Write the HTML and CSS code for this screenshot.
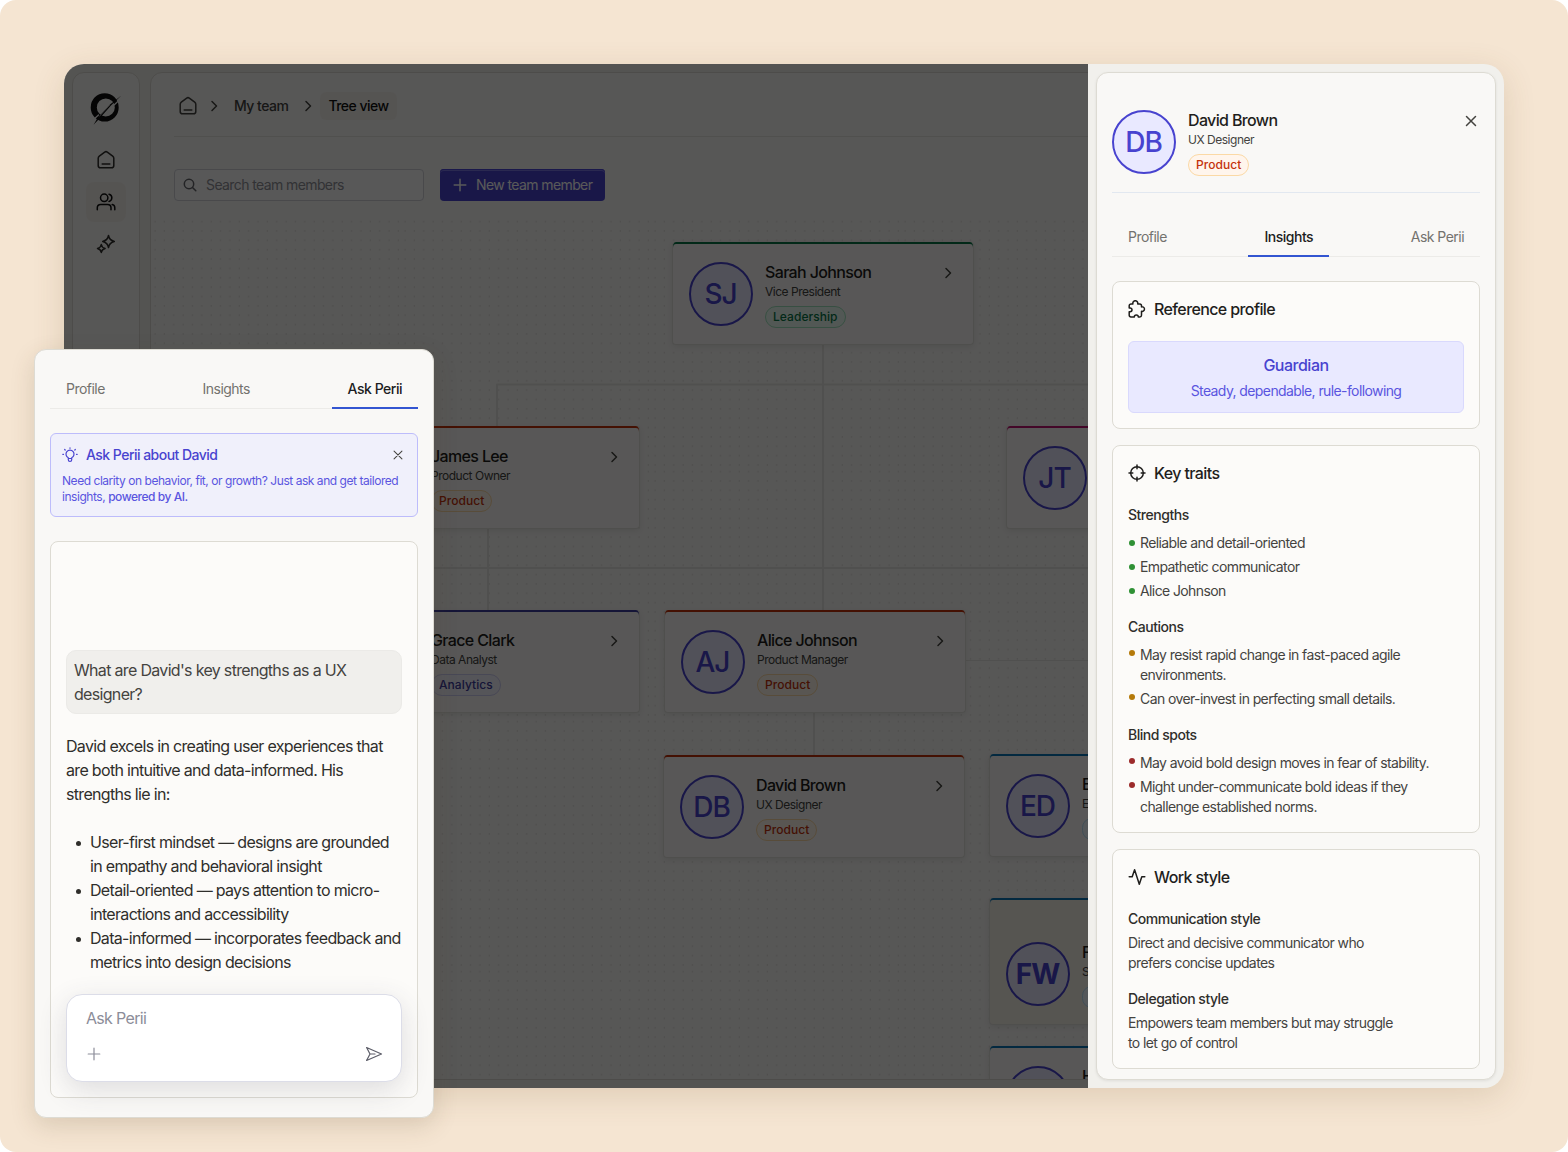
FILE: index.html
```html
<!DOCTYPE html>
<html lang="en">

<head>
    <meta charset="UTF-8">
    <meta name="viewport" content="width=device-width, initial-scale=1.0">
    <link rel="stylesheet" href="styles.css">
    <title>Perii - My team</title>
</head>

<body>
    <!-- shared icons -->
    <svg class="sprite" width="0" height="0">
        <symbol id="i-home" viewBox="0 0 20 20">
            <path d="M2.2 8.2c0-.9.4-1.6 1.1-2.1l5.4-4c.8-.6 1.8-.6 2.6 0l5.4 4c.7.5 1.1 1.2 1.1 2.1v7.2a2.4 2.4 0 0 1-2.4 2.4H4.6a2.4 2.4 0 0 1-2.4-2.4z" />
            <path d="M6.2 14.1h7.6" />
        </symbol>
        <symbol id="i-chevron" viewBox="0 0 16 16">
            <path d="m6 3.5 4.5 4.5L6 12.500" />
        </symbol>
        <symbol id="i-x" viewBox="0 0 16 16">
            <path d="m3.500 3.500 9 9m0-9-9 9" />
        </symbol>
        <symbol id="i-plus" viewBox="0 0 16 16">
            <path d="M8 2.200v11.600M2.200 8h11.600" />
        </symbol>
    </svg>

    <main class="stage">
        <div class="window">
            <section class="workspace">
                <nav class="sidebar">
                    <svg class="logo" viewBox="0 0 32 34">
                        <path fill-rule="evenodd" d="M14.700 2.200a14 14.200 0 1 0 0 28.400a14 14.200 0 1 0 0-28.400zM15.800 7.400a9 9 0 1 1 0 18a9 9 0 1 1 0-18z" />
                        <path class="logo-gap" d="M31 7.500 22.500 15.500M2.500 29.500 8.500 24" />
                        <path d="M31.400 4.600 21 14.400 8.800 28.200 3.600 33.800 7.500 27 20 13.400z" />
                        <path class="logo-gap thin" d="M19.500 14.300 9.600 25.200" />
                    </svg>
                    <a class="nav-item"><svg class="icon"><use href="#i-home" /></svg></a>
                    <a class="nav-item active">
                        <svg class="icon" viewBox="0 0 20 20">
                            <circle cx="8.200" cy="5.800" r="3.700" />
                            <path d="M13 2.200a3.700 3.700 0 0 1 0 7.200M1.300 17.800v-2c0-1.900 1.500-3.400 3.400-3.400h6.900c1.900 0 3.400 1.500 3.400 3.400v2M16.200 12.600c1.600.3 2.600 1.600 2.600 3.200v2" />
                        </svg>
                    </a>
                    <a class="nav-item">
                        <svg class="icon" viewBox="0 0 20 20">
                            <path d="M12.500 1.500c.6 3.500 2 5 5.800 6-3.800 1-5.200 2.500-5.800 6-.6-3.500-2-5-5.800-6 3.800-1 5.200-2.500 5.800-6zM5.300 10.500c.4 2.400 1.400 3.400 3.800 4-2.400.6-3.400 1.600-3.800 4-.4-2.400-1.400-3.400-3.800-4 2.400-.6 3.400-1.600 3.800-4z" />
                        </svg>
                    </a>
                </nav>

                <div class="panel">
                    <header class="crumbs">
                        <svg class="icon"><use href="#i-home" /></svg>
                        <svg class="icon-sm"><use href="#i-chevron" /></svg>
                        <a class="crumb">My team</a>
                        <svg class="icon-sm"><use href="#i-chevron" /></svg>
                        <a class="crumb current">Tree view</a>
                    </header>
                    <div class="toolbar">
                        <div class="search">
                            <svg class="icon-sm" viewBox="0 0 16 16">
                                <circle cx="7" cy="7" r="4.700" />
                                <path d="m10.500 10.500 3.300 3.300" />
                            </svg>
                            <span>Search team members</span>
                        </div>
                        <button class="btn-new"><svg class="icon-sm"><use href="#i-plus" /></svg>New team member</button>
                    </div>

                    <div class="board">
                        <svg class="links" width="1100" height="862">
                            <defs>
                                <pattern id="dot" width="9.36" height="9.36" patternUnits="userSpaceOnUse">
                                    <circle cx="4" cy="4.600" r=".6" />
                                </pattern>
                                <pattern id="tile" width="250" height="250" patternUnits="userSpaceOnUse">
                                    <rect width="250" height="250" fill="url(#dot)" />
                                </pattern>
                            </defs>
                            <rect width="1100" height="862" fill="url(#tile)" />
                            <path d="M672 128v265M346 209v-41.500h754M337 311v82M100 351h1000M663 496v42" />
                            <path class="thin" d="M815 443.500h285" />
                        </svg>

                        <article class="node node-sarah leadership">
                            <div class="avatar">SJ</div>
                            <div class="person">
                                <h3>Sarah Johnson</h3>
                                <p>Vice President</p>
                                <span class="chip">Leadership</span>
                            </div>
                            <svg class="icon-sm"><use href="#i-chevron" /></svg>
                        </article>
                        <article class="node node-james product">
                            <div class="avatar">JL</div>
                            <div class="person">
                                <h3>James Lee</h3>
                                <p>Product Owner</p>
                                <span class="chip">Product</span>
                            </div>
                            <svg class="icon-sm"><use href="#i-chevron" /></svg>
                        </article>
                        <article class="node node-jt people">
                            <div class="avatar">JT</div>
                        </article>
                        <article class="node node-grace analytics">
                            <div class="avatar">GC</div>
                            <div class="person">
                                <h3>Grace Clark</h3>
                                <p>Data Analyst</p>
                                <span class="chip">Analytics</span>
                            </div>
                            <svg class="icon-sm"><use href="#i-chevron" /></svg>
                        </article>
                        <article class="node node-alice product">
                            <div class="avatar">AJ</div>
                            <div class="person">
                                <h3>Alice Johnson</h3>
                                <p>Product Manager</p>
                                <span class="chip">Product</span>
                            </div>
                            <svg class="icon-sm"><use href="#i-chevron" /></svg>
                        </article>
                        <article class="node node-david product">
                            <div class="avatar">DB</div>
                            <div class="person">
                                <h3>David Brown</h3>
                                <p>UX Designer</p>
                                <span class="chip">Product</span>
                            </div>
                            <svg class="icon-sm"><use href="#i-chevron" /></svg>
                        </article>
                        <article class="node node-ed engineering">
                            <div class="avatar">ED</div>
                            <div class="person">
                                <h3>E</h3>
                                <p>E</p>
                                <span class="chip">&nbsp;</span>
                            </div>
                        </article>
                        <article class="node node-fw engineering">
                            <div class="avatar bold">FW</div>
                            <div class="person">
                                <h3>F</h3>
                                <p>S</p>
                                <span class="chip">&nbsp;</span>
                            </div>
                        </article>
                        <article class="node node-h engineering">
                            <div class="avatar"></div>
                            <div class="person">
                                <h3>H</h3>
                                <p>&nbsp;</p>
                                <span class="chip">&nbsp;</span>
                            </div>
                        </article>
                    </div>
                </div>
            </section>

            <aside class="drawer">
                <div class="drawer-panel">
                    <header class="profile product">
                        <div class="avatar">DB</div>
                        <div class="person">
                            <h3>David Brown</h3>
                            <p>UX Designer</p>
                            <span class="chip">Product</span>
                        </div>
                        <svg class="icon-sm close"><use href="#i-x" /></svg>
                    </header>
                    <nav class="tabs">
                        <a class="tab">Profile</a>
                        <a class="tab active">Insights</a>
                        <a class="tab">Ask Perii</a>
                    </nav>

                    <section class="card">
                        <h2>
                            <svg class="icon-md" viewBox="0 0 18 18">
                                <path d="M3 3.900h1.900a2.500 2.500 0 1 1 4.800 0h2a1.800 1.800 0 0 1 1.800 1.800v1.200a2.300 2.300 0 1 1 0 4.400v3.900a1.700 1.700 0 0 1-1.700 1.700h-1.500a2 2 0 1 0-4 0H2.900a1.700 1.700 0 0 1-1.700-1.700v-3.500h.9a1.900 1.900 0 1 0 0-3.800h-.9v-2.200A1.800 1.800 0 0 1 3 3.900z" />
                            </svg>
                            Reference profile
                        </h2>
                        <div class="reference">
                            <strong>Guardian</strong>
                            <span>Steady, dependable, rule-following</span>
                        </div>
                    </section>

                    <section class="card">
                        <h2>
                            <svg class="icon-md" viewBox="0 0 18 18">
                                <circle cx="9" cy="9" r="6.300" />
                                <path d="M9 1v3.800M9 13.200V17M1 9h3.800M13.200 9H17" />
                            </svg>
                            Key traits
                        </h2>
                        <h4>Strengths</h4>
                        <ul class="traits green">
                            <li>Reliable and detail-oriented</li>
                            <li>Empathetic communicator</li>
                            <li>Alice Johnson</li>
                        </ul>
                        <h4>Cautions</h4>
                        <ul class="traits amber">
                            <li>May resist rapid change in fast-paced agile<br>environments.</li>
                            <li>Can over-invest in perfecting small details.</li>
                        </ul>
                        <h4>Blind spots</h4>
                        <ul class="traits red">
                            <li>May avoid bold design moves in fear of stability.</li>
                            <li>Might under-communicate bold ideas if they<br>challenge established norms.</li>
                        </ul>
                    </section>

                    <section class="card">
                        <h2>
                            <svg class="icon-md" viewBox="0 0 18 18">
                                <path d="M1.200 8.800h3l2.400-7 4.700 14.400 2.500-7.400h3" />
                            </svg>
                            Work style
                        </h2>
                        <h4>Communication style</h4>
                        <p>Direct and decisive communicator who<br>prefers concise updates</p>
                        <h4>Delegation style</h4>
                        <p>Empowers team members but may struggle<br>to let go of control</p>
                    </section>
                </div>
            </aside>
        </div>

        <!-- floating assistant -->
        <section class="assistant">
            <nav class="tabs">
                <a class="tab">Profile</a>
                <a class="tab">Insights</a>
                <a class="tab active">Ask Perii</a>
            </nav>
            <div class="notice">
                <div class="notice-title">
                    <svg class="icon-sm" viewBox="0 0 16 16">
                        <path d="M6.300 11.500v-.7a4 4 0 1 1 3.400 0v.7M6.300 11.500h3.400v1.300a1.700 1.700 0 0 1-3.400 0z" />
                        <path d="M8 .8v.5M.8 7.300h.7M14.500 7.300h.7M2.700 2.500l.5.500M13.300 2.500l-.5.500" />
                    </svg>
                    <strong>Ask Perii about David</strong>
                    <svg class="icon-sm close"><use href="#i-x" /></svg>
                </div>
                <p>Need clarity on behavior, fit, or growth? Just ask and get tailored<br>insights, <b>powered by AI.</b></p>
            </div>
            <div class="chat">
                <div class="question">What are David's key strengths as a UX<br>designer?</div>
                <div class="answer">
                    <p>David excels in creating user experiences that<br>are both intuitive and data-informed. His<br>strengths lie in:</p>
                    <ul>
                        <li>User-first mindset — designs are grounded<br>in empathy and behavioral insight</li>
                        <li>Detail-oriented — pays attention to micro-<br>interactions and accessibility</li>
                        <li>Data-informed — incorporates feedback and<br>metrics into design decisions</li>
                    </ul>
                </div>
                <div class="composer">
                    <span class="placeholder">Ask Perii</span>
                    <div class="composer-actions">
                        <svg class="icon-sm"><use href="#i-plus" /></svg>
                        <svg class="icon-md" viewBox="0 0 18 18">
                            <path d="M1.600 2.500 16.500 9 1.600 15.500 5 9zM5 9h5" />
                        </svg>
                    </div>
                </div>
            </div>
        </section>
    </main>
</body>

</html>
```
FILE: styles.css
```css
* {
    margin: 0;
    padding: 0;
    box-sizing: border-box;
}

body {
    width: 1568px;
    height: 1152px;
    background: #fff;
    font-family: Inter, 'Liberation Sans', sans-serif;
    font-size: 14px;
    font-weight: 380;
    line-height: 20px;
    letter-spacing: -0.6px;
    color: #44433f;
    overflow: hidden;
}

h2, h3, h4, strong, b {
    font-weight: 470;
}

ul {
    list-style: none;
}

svg {
    fill: none;
    stroke: currentColor;
    stroke-width: 1.5;
    stroke-linecap: round;
    stroke-linejoin: round;
    flex: none;
}

.sprite {
    position: absolute;
}

.icon {
    width: 20px;
    height: 20px;
}

.icon-md {
    width: 18px;
    height: 18px;
}

.icon-sm {
    width: 16px;
    height: 16px;
}

.stage {
    position: relative;
    width: 1568px;
    height: 1152px;
    padding: 64px;
    background: #f5e5d2;
    border-radius: 16px;
}

.window {
    display: flex;
    width: 1440px;
    height: 1024px;
    border-radius: 20px;
    overflow: hidden;
    background: #f1f0ec;
    box-shadow: 0 8px 32px rgba(110, 80, 40, 0.16);
}

/* workspace, dimmed while the drawer is open */
.workspace {
    position: relative;
    display: flex;
    gap: 10px;
    width: 1024px;
    padding: 8px 0 8px 8px;
    overflow: hidden;
    color: #44433f;
}

.workspace::after {
    content: '';
    position: absolute;
    inset: 0;
    background: rgba(0, 0, 0, 0.65);
}

.sidebar {
    display: flex;
    flex-direction: column;
    align-items: center;
    flex: none;
    gap: 2px;
    width: 68px;
    padding-top: 18px;
    border: 1px solid #dddbd3;
    border-radius: 12px;
    background: #f9f8f6;
}

.logo {
    width: 32px;
    height: 34px;
    margin-bottom: 13px;
    fill: #111;
    stroke: none;
}

.logo .logo-gap {
    stroke: #f9f8f6;
    stroke-width: 1.2;
}

.logo .logo-gap.thin {
    stroke-width: 0.5;
}

.nav-item {
    display: flex;
    align-items: center;
    justify-content: center;
    width: 40px;
    height: 40px;
    border-radius: 8px;
    color: #2f2e2b;
}

.nav-item.active {
    background: #f4f1ec;
    color: #111;
}

.panel {
    display: flex;
    flex-direction: column;
    flex: none;
    width: 1200px;
    border: 1px solid #dddbd3;
    border-radius: 12px;
    background: #f9f8f6;
    overflow: hidden;
}

.crumbs {
    display: flex;
    align-items: center;
    height: 64px;
    margin-left: 23px;
    padding: 2px 0 0 4px;
    border-bottom: 1px solid #e6e5e0;
}

.crumbs .icon {
    margin-right: 8px;
}

.crumb {
    padding: 4px 12px;
    font-weight: 470;
    letter-spacing: -0.52px;
}

.crumb.current {
    margin-left: 4px;
    padding: 4px 8px;
    border-radius: 6px;
    background: #f4f1ec;
    color: #111;
}

.toolbar {
    display: flex;
    gap: 16px;
    height: 80px;
    padding: 32px 0 16px 23px;
}

.search {
    display: flex;
    align-items: center;
    gap: 8px;
    width: 250px;
    padding-left: 7px;
    border: 1px solid #d0d1d8;
    border-radius: 4px;
    background: #fcfcfc;
    color: #8f9097;
}

.search svg {
    color: #64656b;
}

.btn-new {
    display: flex;
    align-items: center;
    gap: 8px;
    width: 165px;
    padding-left: 12px;
    border: 0;
    border-radius: 4px;
    background: #4843cf;
    box-shadow: inset 0 1px #4b45d6, inset 0 2px #7a76e6;
    color: #fff;
    font: inherit;
    letter-spacing: inherit;
    white-space: nowrap;
}

.board {
    position: relative;
    flex: 1;
}

.links {
    display: block;
    stroke: #e6e5e1;
    stroke-width: 2;
}

.links .thin {
    stroke-width: 1;
}

.links pattern circle {
    fill: #cfcec9;
    stroke: none;
}

.links rect {
    stroke: none;
}

/* tree nodes */
.node {
    position: absolute;
    display: flex;
    align-items: center;
    gap: 12px;
    width: 302px;
    height: 103px;
    padding: 2px 17px 0 16px;
    border: 1px solid #e3e2dd;
    border-top: 0;
    border-radius: 4px;
    background: #fbfaf8;
    box-shadow: inset 0 2px var(--team), 0 2px 6px rgba(0, 0, 0, 0.08);
}

.node > .icon-sm {
    margin: 0 0 42px auto;
}

.node-sarah { left: 521px; top: 25px; }
.node-james { left: 187px; top: 209px; }
.node-jt { left: 855px; top: 209px; }
.node-grace { left: 187px; top: 393px; }
.node-alice { left: 513px; top: 393px; }
.node-david { left: 512px; top: 538px; }
.node-ed { left: 838px; top: 537px; }
.node-fw { left: 838px; top: 681px; height: 127px; padding-top: 26px; background: #f6f2e9; }
.node-h { left: 838px; top: 829px; }

.leadership { --team: #067647; --chip-text: #067647; --chip-bg: #ecfdf3; --chip-border: #9fe3bd; }
.product { --team: #c4320a; --chip-text: #c4320a; --chip-bg: #fff5ec; --chip-border: #fbd9a5; }
.people { --team: #c11574; }
.analytics { --team: #3e3c9e; --chip-text: #3e3c9e; --chip-bg: #f4f3ff; --chip-border: #cfcdf2; }
.engineering { --team: #0b76b7; --chip-text: #026aa2; --chip-bg: #f0f9ff; --chip-border: #b9e0f5; }

.avatar {
    display: flex;
    align-items: center;
    justify-content: center;
    flex: none;
    width: 64px;
    height: 64px;
    padding-right: 1px;
    border: 2px solid #4843cf;
    border-radius: 50%;
    background: #e9e9ff;
    color: #4843cf;
    font-size: 28px;
    font-weight: 480;
    letter-spacing: -1px;
}

.avatar.bold {
    font-weight: 700;
}

.person {
    display: flex;
    flex-direction: column;
    align-items: flex-start;
}

.person h3 {
    color: #1f1e1c;
    font-size: 16px;
    line-height: 24px;
    letter-spacing: -0.64px;
}

.person p {
    font-size: 12px;
    line-height: 16px;
    letter-spacing: -0.48px;
}

.chip {
    height: 22px;
    margin-top: 6px;
    padding: 0 7px;
    border: 1px solid var(--chip-border);
    border-radius: 11px;
    background: var(--chip-bg);
    color: var(--chip-text);
    font-size: 12px;
    font-weight: 480;
    letter-spacing: 0.06px;
}

/* right drawer */
.drawer {
    width: 416px;
    padding: 8px;
}

.drawer-panel {
    height: 1008px;
    padding: 35px 15px 0;
    border: 1px solid #dddbd3;
    border-radius: 12px;
    background: #f9f8f6;
    box-shadow: 0 1px 3px rgba(0, 0, 0, 0.08);
}

.profile {
    display: flex;
    align-items: center;
    gap: 12px;
    height: 85px;
    padding-bottom: 16px;
    border-bottom: 1px solid #e2e8f0;
}

.profile .close {
    margin: 0 1px 42px auto;
}

.tabs {
    display: flex;
    justify-content: space-between;
    height: 40px;
    box-shadow: inset 0 -1px #ecebe8;
}

.drawer .tabs {
    margin-top: 24px;
}

.tab {
    padding: 10px 16px;
    color: #73726e;
    letter-spacing: -0.53px;
}

.tab.active {
    border-bottom: 2px solid #3355d1;
    color: #1c1d22;
    font-weight: 470;
    letter-spacing: -0.48px;
}

.card {
    margin-top: 16px;
    padding: 15px;
    border: 1px solid #dddbd3;
    border-radius: 8px;
    background: #fcfbf9;
}

.tabs + .card {
    margin-top: 24px;
}

.card h2 {
    display: flex;
    align-items: center;
    gap: 8px;
    margin-bottom: 20px;
    color: #1f1e1c;
    font-size: 16px;
    line-height: 24px;
    letter-spacing: -0.61px;
}

.card h4 {
    margin-bottom: 4px;
    color: #2f2e2b;
    font-size: 14px;
    letter-spacing: -0.48px;
}

.card p + h4,
.card ul + h4 {
    margin-top: 16px;
}

.reference {
    display: flex;
    flex-direction: column;
    align-items: center;
    gap: 4px;
    padding: 11px;
    border: 1px solid #d9d9fd;
    border-radius: 6px;
    background: #e9e9ff;
    color: #5a55e0;
}

.reference strong {
    color: #4843cf;
    font-size: 16px;
    line-height: 24px;
    letter-spacing: -0.5px;
}

.traits {
    display: flex;
    flex-direction: column;
    gap: 4px;
    padding-top: 4px;
}

.traits li {
    position: relative;
    padding-left: 12px;
}

.traits li::before {
    content: '';
    position: absolute;
    left: 1px;
    top: 5px;
    width: 6px;
    height: 6px;
    border-radius: 50%;
    background: var(--dot);
}

.green { --dot: #2f9135; }
.amber { --dot: #b57a0a; }
.red { --dot: #9c2b2b; }

.traits.green li::before {
    top: 7px;
}

/* assistant popup */
.assistant {
    position: absolute;
    left: 34px;
    top: 349px;
    width: 400px;
    height: 769px;
    padding: 19px 15px 18px 15px;
    border: 1px solid #dddbd3;
    border-radius: 12px;
    background: #f9f8f6;
    box-shadow: 0 8px 24px rgba(80, 60, 30, 0.16);
}

.notice {
    height: 84px;
    margin-top: 24px;
    padding: 11px;
    border: 1px solid #bdbcfb;
    border-radius: 6px;
    background: #f0f0fb;
    color: #5a55e0;
}

.notice p {
    margin-top: 8px;
    font-size: 12px;
    line-height: 16px;
    letter-spacing: -0.455px;
    white-space: nowrap;
}

.notice-title {
    display: flex;
    align-items: center;
    gap: 8px;
    color: #4843cf;
    letter-spacing: -0.53px;
}

.notice-title svg {
    stroke-width: 1.2;
}

.notice-title .close {
    width: 14px;
    height: 14px;
    margin-left: auto;
    margin-right: 1px;
    color: #44433f;
}

.chat {
    display: flex;
    flex-direction: column;
    justify-content: flex-end;
    height: 557px;
    margin-top: 24px;
    padding: 15px;
    border: 1px solid #dddbd3;
    border-radius: 8px;
    background: #fcfbf9;
    font-size: 16px;
    line-height: 24px;
    letter-spacing: -0.68px;
    white-space: nowrap;
}

.question {
    padding: 7px;
    border: 1px solid #ebeae7;
    border-radius: 10px;
    background: #f0efec;
}

.answer {
    margin: 20px 0;
    color: #2f2e2b;
}

.answer ul {
    margin-top: 24px;
}

.answer li {
    position: relative;
    padding-left: 24px;
}

.answer li::before {
    content: '';
    position: absolute;
    left: 10px;
    top: 11px;
    width: 5px;
    height: 5px;
    border-radius: 50%;
    background: #2f2e2b;
}

.composer {
    display: flex;
    flex-direction: column;
    justify-content: space-between;
    height: 88px;
    padding: 11px 18px 18px 19px;
    border: 1px solid #dcdde8;
    border-radius: 16px;
    background: #fff;
    box-shadow: 0 8px 28px rgba(60, 60, 80, 0.16);
    color: #8c8d99;
}

.composer-actions {
    display: flex;
    align-items: center;
    justify-content: space-between;
}

.composer-actions svg {
    stroke-width: 1.2;
}

.composer-actions .icon-md {
    color: #5c5d68;
}
```
